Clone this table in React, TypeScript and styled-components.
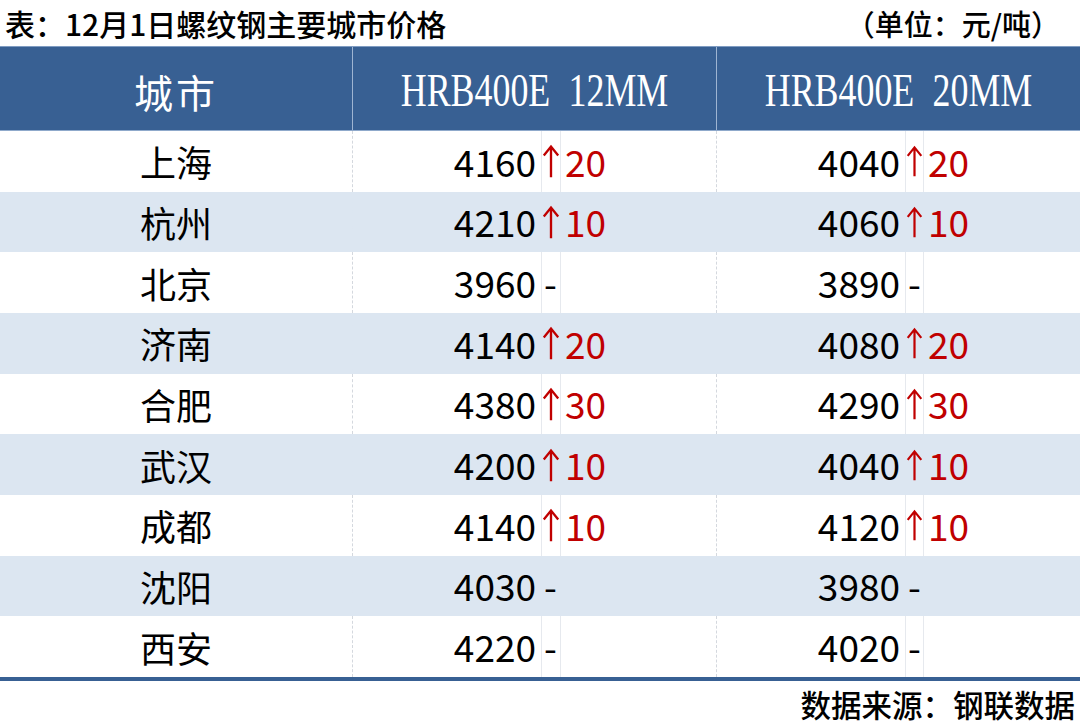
import React from "react";
import styled, { createGlobalStyle } from "styled-components";

const GlobalStyle = createGlobalStyle`
  html, body {
    margin: 0;
    padding: 0;
    background: #fff;
  }
  body {
    font-family: "Noto Sans CJK SC", "Noto Sans", sans-serif;
    color: #000;
  }
`;

const BLUE = "#386093";
const STRIPE = "#dce6f1";
const RED = "#c00000";

const Page = styled.div`
  width: 1080px;
  height: 728px;
  overflow: hidden;
  display: flex;
  flex-direction: column;
`;

const TitleBar = styled.div`
  height: 46px;
  display: flex;
  align-items: center;
  justify-content: space-between;
  padding: 0 20px 0 5px;
  font-size: 30px;
  font-weight: 500;
  line-height: 1;
`;

const Unit = styled.span`
  font-size: 29px;
`;

const Table = styled.div`
  display: flex;
  flex-direction: column;
  border-bottom: 4px solid ${BLUE};
`;

const HeaderRow = styled.div`
  height: 85px;
  box-sizing: border-box;
  display: grid;
  grid-template-columns: 353px 364px 1fr;
  background: ${BLUE};
  border-top: 1px solid #7f9cc2;
  border-bottom: 1px solid #8fa9cb;
  color: #fff;
`;

const HeaderCell = styled.div<{ $serif?: boolean; $last?: boolean }>`
  display: flex;
  align-items: center;
  justify-content: center;
  border-right: ${(p) => (p.$last ? "none" : "1px solid #9fb5d2")};
  font-family: ${(p) =>
    p.$serif
      ? '"Liberation Serif", serif'
      : '"Noto Sans CJK SC", sans-serif'};
  font-size: ${(p) => (p.$serif ? "46px" : "39px")};
  font-weight: 400;
  letter-spacing: ${(p) => (p.$serif ? "0" : "3px")};
  padding-top: 4px;
`;

const Squeeze = styled.span`
  display: inline-block;
  transform: scaleX(0.78);
  white-space: pre;
  word-spacing: 12px;
`;

const Row = styled.div<{ $striped: boolean }>`
  height: 60.67px;
  display: grid;
  grid-template-columns: 353px 188px 20px 156px 188px 19px 1fr;
  background: ${(p) => (p.$striped ? STRIPE : "#fff")};
  font-size: 37px;
  line-height: 1;
`;

const CityCell = styled.div<{ $striped: boolean }>`
  display: flex;
  align-items: center;
  justify-content: center;
  border-right: 1px dashed ${(p) => (p.$striped ? STRIPE : "#d4d8de")};
  font-weight: 400;
  font-size: 36px;
`;

const PriceCell = styled.div`
  display: flex;
  align-items: center;
  justify-content: flex-end;
  padding-right: 5px;
`;

const ArrowCell = styled.div<{ $striped: boolean; $dash: boolean }>`
  display: flex;
  align-items: center;
  justify-content: ${(p) => (p.$dash ? "flex-start" : "center")};
  border-left: 1px solid ${(p) => (p.$striped ? STRIPE : "#e6e9ee")};
  border-right: 1px solid ${(p) => (p.$striped ? STRIPE : "#e6e9ee")};
  white-space: nowrap;
`;

const Dash = styled.span`
  color: #000;
  padding-left: 2px;
`;

const DeltaCell = styled.div<{ $divider?: boolean }>`
  display: flex;
  align-items: center;
  padding-left: 4px;
  color: ${RED};
  border-right: ${(p) => (p.$divider ? "1px dashed #d4d8de" : "none")};
`;

const Footer = styled.div`
  flex: 1;
  display: flex;
  align-items: center;
  justify-content: flex-end;
  padding-right: 5px;
  font-size: 30.5px;
  font-weight: 500;
  line-height: 1;
`;

const UpArrow = () => (
  <svg width="20" height="38" viewBox="0 0 20 38" aria-label="上涨">
    <path
      d="M10 2.5 L10 37 M2 13 L10 3 L18 13"
      fill="none"
      stroke={RED}
      strokeWidth="2.6"
      strokeLinejoin="miter"
    />
  </svg>
);

type Change = number | null;

const rows: { city: string; a: number; da: Change; b: number; db: Change }[] = [
  { city: "上海", a: 4160, da: 20, b: 4040, db: 20 },
  { city: "杭州", a: 4210, da: 10, b: 4060, db: 10 },
  { city: "北京", a: 3960, da: null, b: 3890, db: null },
  { city: "济南", a: 4140, da: 20, b: 4080, db: 20 },
  { city: "合肥", a: 4380, da: 30, b: 4290, db: 30 },
  { city: "武汉", a: 4200, da: 10, b: 4040, db: 10 },
  { city: "成都", a: 4140, da: 10, b: 4120, db: 10 },
  { city: "沈阳", a: 4030, da: null, b: 3980, db: null },
  { city: "西安", a: 4220, da: null, b: 4020, db: null },
];

const PriceGroup: React.FC<{
  price: number;
  change: Change;
  striped: boolean;
  divider?: boolean;
}> = ({ price, change, striped, divider }) => (
  <>
    <PriceCell>{price}</PriceCell>
    <ArrowCell $striped={striped} $dash={change === null}>
      {change === null ? <Dash>-</Dash> : <UpArrow />}
    </ArrowCell>
    <DeltaCell $divider={divider && !striped}>{change ?? ""}</DeltaCell>
  </>
);

export default function App() {
  return (
    <Page>
      <GlobalStyle />
      <TitleBar>
        <span>表：12月1日螺纹钢主要城市价格</span>
        <Unit>（单位：元/吨）</Unit>
      </TitleBar>
      <Table>
        <HeaderRow>
          <HeaderCell>城市</HeaderCell>
          <HeaderCell $serif>
            <Squeeze>HRB400E 12MM</Squeeze>
          </HeaderCell>
          <HeaderCell $serif $last>
            <Squeeze>HRB400E 20MM</Squeeze>
          </HeaderCell>
        </HeaderRow>
        {rows.map((r, i) => {
          const striped = i % 2 === 1;
          return (
            <Row key={r.city} $striped={striped}>
              <CityCell $striped={striped}>{r.city}</CityCell>
              <PriceGroup price={r.a} change={r.da} striped={striped} divider />
              <PriceGroup price={r.b} change={r.db} striped={striped} />
            </Row>
          );
        })}
      </Table>
      <Footer>数据来源：钢联数据</Footer>
    </Page>
  );
}
